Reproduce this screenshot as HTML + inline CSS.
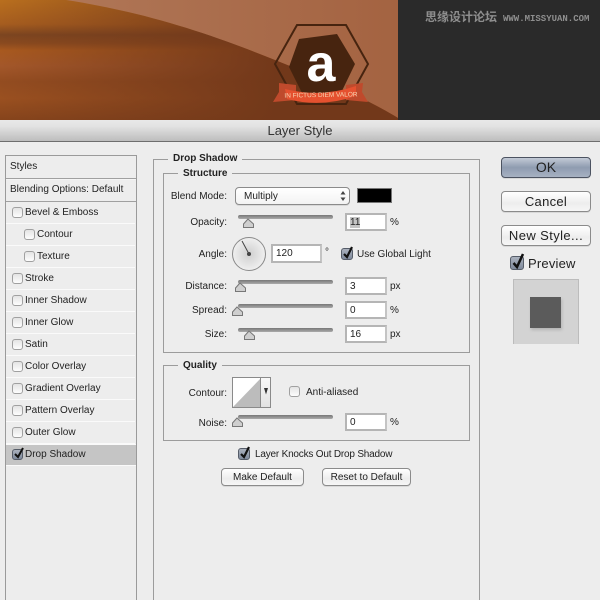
<!DOCTYPE html>
<html><head><meta charset="utf-8">
<style>
html,body{margin:0;padding:0;background:#ededed}
#p{position:relative;width:600px;height:600px;overflow:hidden;background:#ededed;font-family:"Liberation Sans","Noto Sans CJK SC",sans-serif;font-size:10px;letter-spacing:0;color:#222}
#p div,#p span.a{position:absolute;box-sizing:border-box}
.t{white-space:nowrap;line-height:12px}
.r{text-align:right;width:80px;left:147px}
.row{left:6px;width:129px;height:22px;border-bottom:1px solid #fafafa}
.cb{width:11px;height:11px;border:1px solid #a0a0a0;border-radius:3px;background:linear-gradient(#e4e4e4,#fdfdfd)}
.cb2{width:12px;height:12px;background:linear-gradient(#aab1bd,#7f8a9c);border-color:#555c68}
.tr{left:238px;width:95px;height:4px;background:linear-gradient(#777,#aaa);border-radius:2px}
.f{left:345px;width:42px;height:18px;background:#fff;border:2px solid #b5b5b5;border-right-color:#c4c4c4;padding:2px 0 0 3px;line-height:12px;font-size:10px}
.b{background:linear-gradient(#fff,#ededed 60%,#f6f6f6);border:1px solid #8b8b8b;border-radius:4px;text-align:center;box-shadow:0 1px 0 #d8d8d8}
.g{border:1px solid #9c9c9c}
.leg{background:#ededed;font-weight:bold;padding:0 5px;line-height:12px;white-space:nowrap}
svg{position:absolute;overflow:visible}
</style></head><body><div id="p">

<svg style="left:0;top:0" width="600" height="120" viewBox="0 0 600 120">
<defs>
<linearGradient id="v" x1="0" y1="0" x2="0" y2="1">
<stop offset="0" stop-color="#b96f1e"/><stop offset=".2" stop-color="#a65d1f"/><stop offset=".29" stop-color="#7c4520"/><stop offset=".36" stop-color="#8a4a1f"/><stop offset=".42" stop-color="#a8591f"/><stop offset=".55" stop-color="#a3572a"/><stop offset=".68" stop-color="#934c20"/><stop offset=".82" stop-color="#9a5020"/><stop offset="1" stop-color="#86441c"/>
</linearGradient>
<linearGradient id="h" x1="0" y1="0" x2="1" y2="0">
<stop offset="0" stop-color="#72381a" stop-opacity="0"/><stop offset=".45" stop-color="#72381a" stop-opacity=".65"/><stop offset=".7" stop-color="#72381a" stop-opacity="1"/><stop offset="1" stop-color="#72381a"/>
</linearGradient>
<linearGradient id="l" x1="0" y1="0" x2="1" y2="0">
<stop offset="0" stop-color="#b27a5b"/><stop offset="1" stop-color="#a46341"/>
</linearGradient>
</defs>
<rect width="398" height="120" fill="url(#l)"/>
<path d="M66 0C150 13 215 36 275 60C320 78 365 98 398 118V120H0V0Z" fill="url(#v)"/>
<path d="M66 0C150 13 215 36 275 60C320 78 365 98 398 118V120H0V0Z" fill="url(#h)"/>
<rect x="398" width="202" height="120" fill="#2a2a2a"/>
<path d="M297 25H346L368 64L346 104H297L275 64Z" fill="none" stroke="#47240f" stroke-width="2"/>
<path d="M299 39L337 34L355 64L340 95H303L289 67Z" fill="#47240f"/>
<text x="321" y="81" text-anchor="middle" font-family="Liberation Sans" font-weight="bold" font-size="52" fill="#fff">a</text>
<path d="M279 83L296 85L296 100L273 102L279 92Z" fill="#bf4a2c"/>
<path d="M363 83L346 85L346 100L368 102L362 92Z" fill="#bf4a2c"/>
<path d="M285 89Q321 98 356 86L356 96Q321 108 287 99Z" fill="#e5512f"/>
<text x="321" y="97" text-anchor="middle" font-family="Liberation Sans" font-size="6.500" fill="#f8d3b0" transform="rotate(-1 321 96)">IN FICTUS DIEM VALOR</text>
<text x="425" y="21" font-family="Noto Sans CJK SC" font-size="12" font-weight="bold" fill="#8e8e8e" letter-spacing="0">思缘设计论坛</text>
<text x="503" y="21" font-family="Liberation Mono" font-size="9" font-weight="bold" fill="#8e8e8e" letter-spacing="0">WWW.MISSYUAN.COM</text>
</svg>

<div style="left:0;top:120px;width:600px;height:22px;background:linear-gradient(#e9e9e9,#e2e2e2 30%,#bdbdbd);border-bottom:1px solid #6e6e6e"></div>
<div class="t" style="left:0;top:124px;width:600px;text-align:center;font-size:13px;color:#333;line-height:14px">Layer Style</div>

<div style="left:5px;top:155px;width:132px;height:460px;border:1px solid #9a9a9a;background:#ededed"></div>
<div style="left:6px;top:178px;width:130px;height:2px;background:#a0a0a0;border-bottom:1px solid #f5f5f5"></div>
<div style="left:6px;top:201px;width:130px;height:1px;background:#a0a0a0"></div>
<div class="t" style="left:10px;top:161px">Styles</div>
<div class="t" style="left:10px;top:184px">Blending Options: Default</div>

<div class="row" style="top:202px"></div><div class="cb" style="left:12px;top:207px"></div><div class="t" style="left:25px;top:207px">Bevel &amp; Emboss</div>
<div class="row" style="top:224px"></div><div class="cb" style="left:24px;top:229px"></div><div class="t" style="left:37px;top:229px">Contour</div>
<div class="row" style="top:246px"></div><div class="cb" style="left:24px;top:251px"></div><div class="t" style="left:37px;top:251px">Texture</div>
<div class="row" style="top:268px"></div><div class="cb" style="left:12px;top:273px"></div><div class="t" style="left:25px;top:273px">Stroke</div>
<div class="row" style="top:290px"></div><div class="cb" style="left:12px;top:295px"></div><div class="t" style="left:25px;top:295px">Inner Shadow</div>
<div class="row" style="top:312px"></div><div class="cb" style="left:12px;top:317px"></div><div class="t" style="left:25px;top:317px">Inner Glow</div>
<div class="row" style="top:334px"></div><div class="cb" style="left:12px;top:339px"></div><div class="t" style="left:25px;top:339px">Satin</div>
<div class="row" style="top:356px"></div><div class="cb" style="left:12px;top:361px"></div><div class="t" style="left:25px;top:361px">Color Overlay</div>
<div class="row" style="top:378px"></div><div class="cb" style="left:12px;top:383px"></div><div class="t" style="left:25px;top:383px">Gradient Overlay</div>
<div class="row" style="top:400px"></div><div class="cb" style="left:12px;top:405px"></div><div class="t" style="left:25px;top:405px">Pattern Overlay</div>
<div class="row" style="top:422px"></div><div class="cb" style="left:12px;top:427px"></div><div class="t" style="left:25px;top:427px">Outer Glow</div>
<div style="left:6px;top:444px;width:130px;height:22px;background:#c5c5c5;border-top:1px solid #fafafa;border-bottom:1px solid #fafafa"></div>
<div class="cb cb2" style="left:12px;top:449px;width:11px;height:11px"></div>
<svg style="left:12px;top:446px" width="14" height="14"><path d="M3 8L6 11L11 2" fill="none" stroke="#111" stroke-width="2"/></svg>
<div class="t" style="left:25px;top:449px">Drop Shadow</div>

<div class="g" style="left:153px;top:159px;width:327px;height:460px"></div>
<div class="leg" style="left:168px;top:153px">Drop Shadow</div>
<div class="g" style="left:163px;top:173px;width:307px;height:180px"></div>
<div class="leg" style="left:178px;top:168px">Structure</div>

<div class="t r" style="top:191px">Blend Mode:</div>
<div class="b" style="left:235px;top:187px;width:115px;height:18px;text-align:left;padding:3px 0 0 8px;line-height:12px;background:linear-gradient(#fff,#f3f3f3)">Multiply</div>
<svg style="left:340px;top:191px" width="6" height="10"><path d="M3 0L5.500 3.500H.5ZM3 10L5.500 6.500H.5Z" fill="#444"/></svg>
<div style="left:357px;top:188px;width:35px;height:15px;background:#000;border:1px solid #777"></div>

<div class="t r" style="top:217px">Opacity:</div>
<div class="tr" style="top:215px"></div>
<div class="f" style="top:213px"><span style="background:#c4c4c4">11</span></div>
<div class="t" style="left:390px;top:217px">%</div>

<div class="t r" style="top:249px">Angle:</div>
<svg style="left:231px;top:236px" width="36" height="36"><defs><radialGradient id="d" cx=".5" cy=".5" r=".6"><stop offset="0" stop-color="#cfcfcf"/><stop offset="1" stop-color="#f6f6f6"/></radialGradient></defs><circle cx="18" cy="18" r="16.500" fill="url(#d)" stroke="#8a8a8a"/><path d="M18 18L11 5" stroke="#444" stroke-width="1"/><circle cx="18" cy="18" r="2" fill="#444"/></svg>
<div class="f" style="left:271px;top:244px;width:51px;height:19px">120</div>
<div class="t" style="left:325px;top:247px">°</div>
<div class="cb cb2" style="left:341px;top:248px"></div>
<svg style="left:341px;top:245px" width="14" height="15"><path d="M3 9L6 12L11 2" fill="none" stroke="#111" stroke-width="2.200"/></svg>
<div class="t" style="left:357px;top:249px">Use Global Light</div>

<div class="t r" style="top:281px">Distance:</div>
<div class="tr" style="top:280px"></div>
<div class="f" style="top:277px">3</div><div class="t" style="left:390px;top:281px">px</div>
<div class="t r" style="top:305px">Spread:</div>
<div class="tr" style="top:304px"></div>
<div class="f" style="top:301px">0</div><div class="t" style="left:390px;top:305px">%</div>
<div class="t r" style="top:329px">Size:</div>
<div class="tr" style="top:328px"></div>
<div class="f" style="top:325px">16</div><div class="t" style="left:390px;top:329px">px</div>

<svg style="left:0;top:0" width="600" height="600">
<g fill="#cfcfcf" stroke="#777" stroke-width="1">
<path d="M248 219L253.500 224V227.500H243.500V224Z"/>
<path d="M240 283L245.500 288V291.500H235.500V288Z"/>
<path d="M237 307L242.500 312V315.500H232.500V312Z"/>
<path d="M249 331L254.500 336V339.500H244.500V336Z"/>
<path d="M237 418L242.500 423V426.500H232.500V423Z"/>
</g></svg>

<div class="g" style="left:163px;top:365px;width:307px;height:76px"></div>
<div class="leg" style="left:178px;top:360px">Quality</div>
<div class="t r" style="top:388px">Contour:</div>
<div style="left:232px;top:377px;width:39px;height:31px;background:#fff;border:1px solid #8a8a8a"></div>
<svg style="left:233px;top:378px" width="28" height="29"><path d="M0 29L28 0V29Z" fill="#bcbcbc"/></svg>
<div style="left:260px;top:378px;width:1px;height:29px;background:#8a8a8a"></div>
<div style="left:261px;top:378px;width:9px;height:29px;background:linear-gradient(#f8f8f8,#e2e2e2)"></div>
<svg style="left:264px;top:388px" width="4" height="7"><path d="M0 0H4L2 6.500Z" fill="#333"/></svg>
<div class="cb" style="left:289px;top:386px"></div>
<div class="t" style="left:306px;top:387px">Anti-aliased</div>
<div class="t r" style="top:418px">Noise:</div>
<div class="tr" style="top:415px"></div>
<div class="f" style="top:413px">0</div><div class="t" style="left:390px;top:417px">%</div>

<div class="cb cb2" style="left:238px;top:448px"></div>
<svg style="left:238px;top:445px" width="14" height="15"><path d="M3 9L6 12L11 2" fill="none" stroke="#111" stroke-width="2.200"/></svg>
<div class="t" style="left:255px;top:449px;letter-spacing:-.2px">Layer Knocks Out Drop Shadow</div>
<div class="b" style="left:221px;top:468px;width:83px;height:18px;line-height:17px">Make Default</div>
<div class="b" style="left:322px;top:468px;width:89px;height:18px;line-height:17px">Reset to Default</div>

<div class="b" style="left:501px;top:157px;width:90px;height:21px;line-height:19px;font-size:14px;letter-spacing:0;background:linear-gradient(#c3cad6,#8f9cb0 50%,#a7b1c2);border-color:#4c5361">OK</div>
<div class="b" style="left:501px;top:191px;width:90px;height:21px;line-height:19px;font-size:13px;letter-spacing:.3px">Cancel</div>
<div class="b" style="left:501px;top:225px;width:90px;height:21px;line-height:19px;font-size:13px;letter-spacing:.4px">New Style...</div>
<div class="cb cb2" style="left:510px;top:256px;width:14px;height:14px"></div>
<svg style="left:510px;top:252px" width="16" height="18"><path d="M3.500 11L7 15L13 2" fill="none" stroke="#111" stroke-width="2.500"/></svg>
<div class="t" style="left:528px;top:257px;font-size:13px;line-height:14px;letter-spacing:.2px">Preview</div>
<div style="left:513px;top:279px;width:66px;height:65px;background:#d3d3d3;border:1px solid #bcbcbc;border-bottom:0"></div>
<div style="left:530px;top:297px;width:31px;height:31px;background:#5b5b5b;box-shadow:1px 2px 3px rgba(0,0,0,.15)"></div>

</div></body></html>
